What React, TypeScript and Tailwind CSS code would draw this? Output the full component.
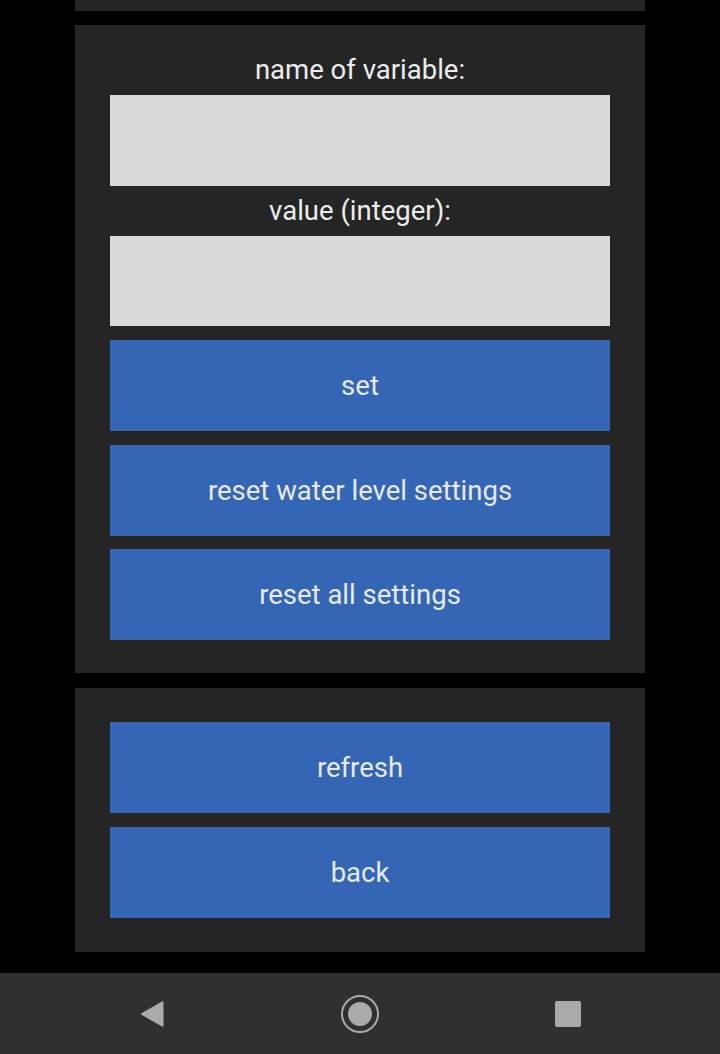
const font = { fontFamily: "Roboto, 'Noto Sans', sans-serif" };

function Label({ text }: { text: string }) {
  return (
    <div className="flex h-[50px] items-center justify-center text-[27.5px] leading-[32px] text-[#ececec]">
      {text}
    </div>
  );
}

function Field({ tall }: { tall?: boolean }) {
  return (
    <input
      type="text"
      className={
        tall
          ? "block h-[91px] w-full bg-[#d9d9d9] outline-none"
          : "block h-[90px] w-full bg-[#d9d9d9] outline-none"
      }
    />
  );
}

function Btn({ text, className = "" }: { text: string; className?: string }) {
  return (
    <button
      type="button"
      className={
        "flex h-[91px] w-full items-center justify-center bg-[#3565b5] text-[27.5px] leading-[32px] text-[#e6eaf2] " +
        className
      }
    >
      {text}
    </button>
  );
}

function NavBar() {
  return (
    <div className="flex h-[81px] items-center justify-center bg-[#303030]">
      <div className="flex w-[208px] justify-center">
        <svg width="26" height="30" viewBox="0 0 26 30">
          <path
            d="M23 2.5 Q24.5 1.8 24.5 3.5 L24.5 26.5 Q24.5 28.2 23 27.5 L2.5 15.8 Q1.5 15 2.5 14.2 Z"
            fill="#aaaaaa"
          />
        </svg>
      </div>
      <div className="flex w-[208px] justify-center">
        <svg width="40" height="40" viewBox="0 0 40 40">
          <circle cx="20" cy="20" r="18" fill="none" stroke="#aaaaaa" strokeWidth="2" />
          <circle cx="20" cy="20" r="12" fill="#aaaaaa" />
        </svg>
      </div>
      <div className="flex w-[208px] justify-center">
        <div className="h-[26px] w-[26px] rounded-[2px] bg-[#aaaaaa]" />
      </div>
    </div>
  );
}

export default function App() {
  return (
    <div className="flex h-[1054px] w-[720px] flex-col bg-black" style={font}>
      <div className="mx-[75px] h-[11px] bg-[#252525]" />
      <div className="mx-[75px] mt-[14px] bg-[#252525] px-[35px] pb-[33px] pt-[20px]">
        <Label text="name of variable:" />
        <Field tall />
        <Label text="value (integer):" />
        <Field />
        <Btn text="set" className="mt-[14px]" />
        <Btn text="reset water level settings" className="mt-[14px]" />
        <Btn text="reset all settings" className="mt-[13px]" />
      </div>
      <div className="mx-[75px] mt-[15px] flex flex-col gap-[14px] bg-[#252525] px-[35px] py-[34px]">
        <Btn text="refresh" />
        <Btn text="back" />
      </div>
      <div className="flex-1" />
      <NavBar />
    </div>
  );
}
